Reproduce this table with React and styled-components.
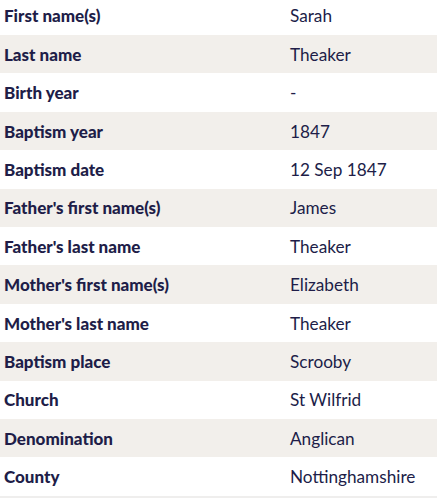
import React from "react";
import styled, { createGlobalStyle } from "styled-components";

const Global = createGlobalStyle`
  html, body { margin: 0; padding: 0; background: #ffffff; }
  body { font-family: Lato, "Open Sans", sans-serif; overflow: hidden; }
`;

const Table = styled.div`
  display: flex;
  flex-direction: column;
  margin-top: -3.4px;
  width: 437px;
  border-bottom: 2px solid #efeeed;
`;

const Row = styled.div`
  display: grid;
  grid-template-columns: 286px 1fr;
  align-items: center;
  height: 38.42px;
  background: ${(p) => (p.$shaded ? "#f2efeb" : "#ffffff")};
`;

const Label = styled.div`
  padding-left: 4px;
  font-family: Lato, sans-serif;
  font-weight: 900;
  font-size: 17px;
  color: #201d48;
`;

const Value = styled.div`
  padding-left: 4px;
  font-family: Lato, sans-serif;
  font-weight: 400;
  font-size: 17.2px;
  color: #201d48;
`;

const rows = [
  ["First name(s)", "Sarah"],
  ["Last name", "Theaker"],
  ["Birth year", "-"],
  ["Baptism year", "1847"],
  ["Baptism date", "12 Sep 1847"],
  ["Father's first name(s)", "James"],
  ["Father's last name", "Theaker"],
  ["Mother's first name(s)", "Elizabeth"],
  ["Mother's last name", "Theaker"],
  ["Baptism place", "Scrooby"],
  ["Church", "St Wilfrid"],
  ["Denomination", "Anglican"],
  ["County", "Nottinghamshire"],
];

export default function App() {
  return (
    <>
      <Global />
      <Table>
        {rows.map(([k, v], i) => (
          <Row key={k} $shaded={i % 2 === 1}>
            <Label>{k}</Label>
            <Value>{v}</Value>
          </Row>
        ))}
      </Table>
    </>
  );
}
